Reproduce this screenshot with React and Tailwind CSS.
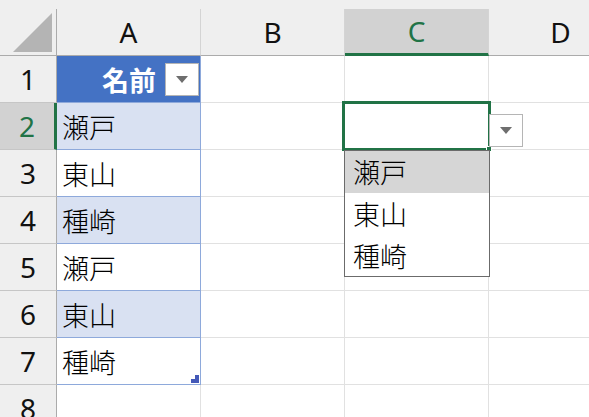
import React from 'react';

const FONT = { fontFamily: '"Noto Sans", "Noto Sans CJK JP", sans-serif' };
const CJK = { fontFamily: '"Noto Sans CJK JP", sans-serif' };

const rows = [
  { n: 1, a: '名前', head: true },
  { n: 2, a: '瀬戸', band: true },
  { n: 3, a: '東山' },
  { n: 4, a: '種崎', band: true },
  { n: 5, a: '瀬戸' },
  { n: 6, a: '東山', band: true },
  { n: 7, a: '種崎', last: true },
  { n: 8, a: '', outside: true },
];

const options = ['瀬戸', '東山', '種崎'];

const Arrow = () => (
  <svg width="12" height="7" viewBox="0 0 12 7">
    <path d="M0 0 H12 L6 7 Z" fill="#6e6e6e" />
  </svg>
);

const ColHeader = ({ label, selected }) => (
  <div
    className={
      'w-[144px] shrink-0 flex items-center justify-center border-r border-[#d4d4d4] text-[28px] leading-none ' +
      (selected
        ? 'bg-[#d2d2d2] text-[#217346] border-b-[3px] border-b-[#217346]'
        : 'border-b border-b-[#ababab] text-[#111]')
    }
  >
    {label}
  </div>
);

export default function App() {
  return (
    <div className="relative w-[589px] h-[417px] overflow-hidden bg-white" style={FONT}>
      {/* strip above headers */}
      <div className="h-[9px] bg-[#efefef]" />
      {/* column headers */}
      <div className="flex h-[47px] bg-[#efefef]">
        <div className="w-[57px] shrink-0 border-r border-b border-[#ababab] flex items-end justify-end pr-[4px] pb-[3px]">
          <svg width="39" height="39" viewBox="0 0 39 39">
            <path d="M39 0 V39 H0 Z" fill="#b4b4b4" />
          </svg>
        </div>
        <ColHeader label="A" />
        <ColHeader label="B" />
        <ColHeader label="C" selected />
        <ColHeader label="D" />
      </div>

      {rows.map((r) => (
        <div key={r.n} className="flex h-[47px]">
          <div
            className={
              'w-[57px] shrink-0 flex items-center justify-center text-[28px] leading-none border-b border-[#c6c6c6] ' +
              (r.n === 2
                ? 'bg-[#d2d2d2] text-[#217346] border-r-[3px] border-r-[#217346]'
                : 'bg-[#efefef] text-[#111] border-r border-r-[#ababab]')
            }
          >
            {r.n}
          </div>
          {r.head ? (
            <div className="w-[144px] shrink-0 bg-[#4472c4] border-r border-b border-[#8ea9db] flex items-center justify-end pr-[1px]">
              <span className="text-[27px] font-bold text-white mr-[9px] leading-none" style={CJK}>
                {r.a}
              </span>
              <div className="w-[34px] h-[33px] bg-white border border-[#b5b5b5] flex items-center justify-center">
                <Arrow />
              </div>
            </div>
          ) : (
            <div
              className={
                'relative w-[144px] shrink-0 flex items-center pl-[5px] text-[27px] font-light leading-none text-black ' +
                (r.outside
                  ? 'border-r border-b border-[#e1e1e1]'
                  : 'border-r border-b border-[#8ea9db] ' + (r.band ? 'bg-[#d9e1f2]' : 'bg-white'))
              }
              style={CJK}
            >
              {r.a}
              {r.last && (
                <svg width="8" height="8" viewBox="0 0 8 8" className="absolute right-[1px] bottom-[1px]">
                  <path d="M4 0 H8 V8 H0 V4 H4 Z" fill="#4459b8" />
                </svg>
              )}
            </div>
          )}
          <div className="w-[144px] shrink-0 border-r border-b border-[#e1e1e1]" />
          <div className="w-[144px] shrink-0 border-r border-b border-[#e1e1e1]" />
          <div className="w-[144px] shrink-0 border-r border-b border-[#e1e1e1]" />
        </div>
      ))}

      {/* active cell C2 */}
      <div className="absolute left-[342px] top-[101px] w-[149px] h-[50px] border-[3px] border-[#217346]" />
      <div className="absolute left-[486px] top-[146px] w-[6px] h-[6px] bg-[#217346] border border-white" />

      {/* validation dropdown button */}
      <div className="absolute left-[489px] top-[114px] w-[34px] h-[33px] bg-white border border-[#b5b5b5] flex items-center justify-center">
        <Arrow />
      </div>

      {/* dropdown list */}
      <div className="absolute left-[344px] top-[150px] w-[146px] h-[127px] bg-white border border-[#6b6b6b] flex flex-col" style={CJK}>
        {options.map((o, i) => (
          <div
            key={o}
            className={
              'h-[42px] flex items-center pl-[8px] text-[27px] font-light leading-none text-black ' +
              (i === 0 ? 'bg-[#d6d6d6]' : '')
            }
          >
            {o}
          </div>
        ))}
      </div>
    </div>
  );
}
